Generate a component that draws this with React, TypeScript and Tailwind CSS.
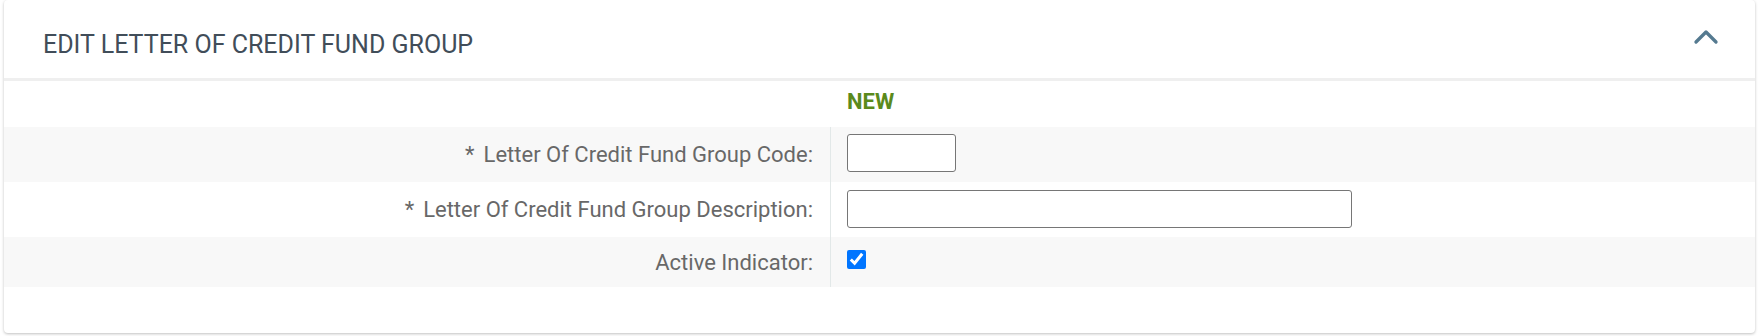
import { ChevronUp } from 'lucide-react';

const rows = [
  { label: 'Letter Of Credit Fund Group Code:', required: true, kind: 'short', shade: true },
  { label: 'Letter Of Credit Fund Group Description:', required: true, kind: 'long', shade: false },
  { label: 'Active Indicator:', required: false, kind: 'check', shade: true },
];

const App = () => {
  return (
    <div className="w-full h-[336px] bg-white pl-[4px] pr-[6px] font-['Roboto',sans-serif]">
      <div className="bg-white rounded-[4px] shadow-[0_1px_3px_rgba(0,0,0,0.25)] h-[333px]">
        <div className="flex items-center justify-between h-[81px] pl-[39px] pr-[29px] border-b-[3px] border-[#efefef]">
          <h2 className="text-[25px] text-[#414d59] pt-[11px]">EDIT LETTER OF CREDIT FUND GROUP</h2>
          <ChevronUp className="w-[40px] h-[40px] text-[#557a90] -mt-[4px]" strokeWidth={2} />
        </div>

        <div className="flex h-[46px] items-center">
          <div className="w-[826px]" />
          <div className="pl-[17px] text-[22px] font-bold text-[#5b8a1c] pb-[6px]">NEW</div>
        </div>

        {rows.map((row, idx) => (
          <div key={idx} className={`flex ${row.shade ? 'bg-[#f8f8f8]' : 'bg-white'} ${row.kind === 'check' ? 'h-[50px]' : 'h-[55px]'}`}>
            <div className="w-[826px] flex items-center justify-end pr-[17px] text-[22px] text-[#686868]">
              {row.required && <span className="mr-[9px]">*</span>}
              {row.label}
            </div>
            <div className="flex-1 flex items-center pl-[16px] border-l border-[#e2e8e8]">
              {row.kind === 'short' && (
                <input type="text" className="w-[109px] h-[38px] border border-[#767676] rounded-[3px] bg-white -mt-[3px]" />
              )}
              {row.kind === 'long' && (
                <input type="text" className="w-[505px] h-[38px] border border-[#767676] rounded-[3px] bg-white -mt-[1px]" />
              )}
              {row.kind === 'check' && (
                <input type="checkbox" defaultChecked className="w-[19px] h-[19px] accent-[#0075ff] -mt-[5px]" />
              )}
            </div>
          </div>
        ))}
      </div>
    </div>
  );
};

export default App;
